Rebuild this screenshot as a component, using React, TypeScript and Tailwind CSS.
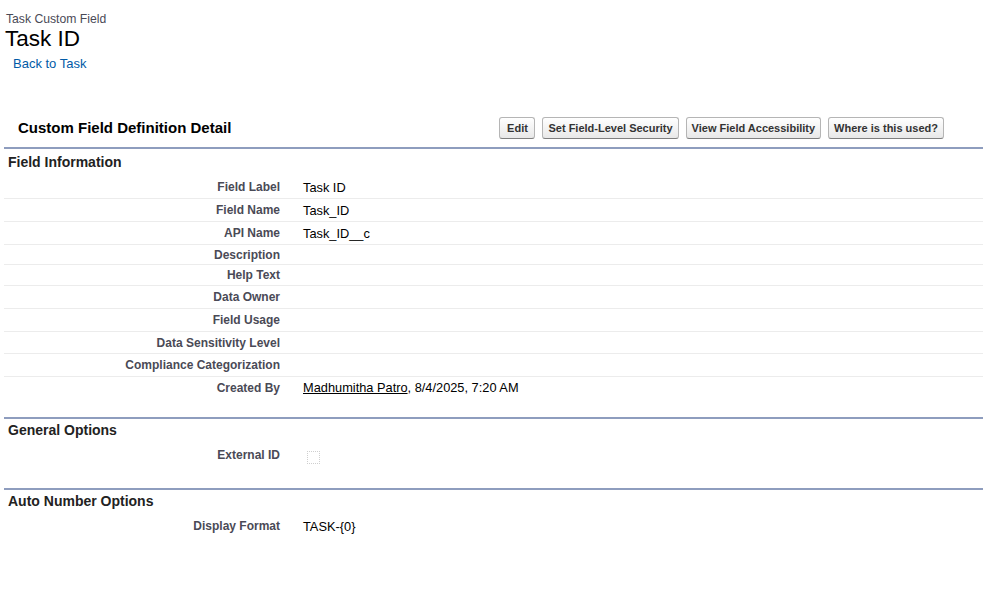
const font = { fontFamily: '"Liberation Sans", Arial, sans-serif' };

type Row = { label: string; value?: React.ReactNode; h: string };

const fieldInfo: Row[] = [
  { label: 'Field Label', value: 'Task ID', h: 'h-[23px]' },
  { label: 'Field Name', value: 'Task_ID', h: 'h-[23px]' },
  { label: 'API Name', value: 'Task_ID__c', h: 'h-[23px]' },
  { label: 'Description', h: 'h-[20px]' },
  { label: 'Help Text', h: 'h-[21px]' },
  { label: 'Data Owner', h: 'h-[23px]' },
  { label: 'Field Usage', h: 'h-[23px]' },
  { label: 'Data Sensitivity Level', h: 'h-[22px]' },
  { label: 'Compliance Categorization', h: 'h-[23px]' },
];

function DetailRow({ label, value, h, last }: Row & { last?: boolean }) {
  return (
    <div className={`flex items-center ${h} ${last ? '' : 'border-b border-[#ececec]'}`}>
      <div className="w-[288px] pr-[12px] text-right text-[12px] leading-[14px] font-bold text-[#4a4a56]">{label}</div>
      <div className="pl-[11px] text-[12.8px] leading-[15px] text-black">{value}</div>
    </div>
  );
}

function SectionHeader({ title, pad }: { title: string; pad: string }) {
  return (
    <div className={`border-t-2 border-[#8e9dbe] pl-[4px] text-[14px] leading-[16px] font-bold text-[#222] ${pad}`}>
      {title}
    </div>
  );
}

function Btn({ children }: { children: React.ReactNode }) {
  return (
    <button className="h-[22px] min-w-[36px] rounded-[3px] border border-[#b5b5b5] border-b-[#7f7f7f] bg-gradient-to-b from-[#ffffff] to-[#e8e8e8] px-[5px] text-[11px] leading-[13px] font-bold text-[#333]">
      {children}
    </button>
  );
}

export default function App() {
  return (
    <div className="h-[608px] w-[983px] bg-white" style={font}>
      <div className="pl-[6px] pt-[13px]">
        <div className="text-[12.2px] leading-[13px] text-[#4a4a56]">Task Custom Field</div>
        <div className="-ml-[1px] text-[22.5px] leading-[26px] text-black">Task ID</div>
        <div className="mt-[4px] pl-[7px] text-[13px] leading-[15px] text-[#015ba7]">Back to Task</div>
      </div>

      <div className="ml-[4px] mt-[42px]">
        <div className="flex h-[34px] items-start justify-between">
          <h2 className="mt-[6px] pl-[14px] text-[15px] leading-[18px] font-bold text-black">Custom Field Definition Detail</h2>
          <div className="mr-[39px] mt-[4px] flex gap-[7px]">
            <Btn>Edit</Btn>
            <Btn>Set Field-Level Security</Btn>
            <Btn>View Field Accessibility</Btn>
            <Btn>Where is this used?</Btn>
          </div>
        </div>

        <SectionHeader title="Field Information" pad="pt-[5px] pb-[6px]" />
        <div>
          {fieldInfo.map((r) => (
            <DetailRow key={r.label} {...r} />
          ))}
          <DetailRow
            label="Created By"
            h="h-[21px]"
            last
            value={
              <span>
                <span className="underline">Madhumitha Patro</span>, 8/4/2025, 7:20 AM
              </span>
            }
          />
        </div>

        <div className="mt-[19px]">
          <SectionHeader title="General Options" pad="pt-[3px] pb-[4px]" />
          <div className="flex h-[26px] items-center">
            <div className="w-[288px] pr-[12px] text-right text-[12px] leading-[14px] font-bold text-[#4a4a56]">External ID</div>
            <div className="pl-[15px] pt-[5px]">
              <div className="h-[13px] w-[13px] border border-dotted border-[#cfcfcf]" />
            </div>
          </div>
        </div>

        <div className="mt-[20px]">
          <SectionHeader title="Auto Number Options" pad="pt-[3px] pb-[4px]" />
          <DetailRow label="Display Format" value="TASK-{0}" h="h-[26px]" last />
        </div>
      </div>
    </div>
  );
}
